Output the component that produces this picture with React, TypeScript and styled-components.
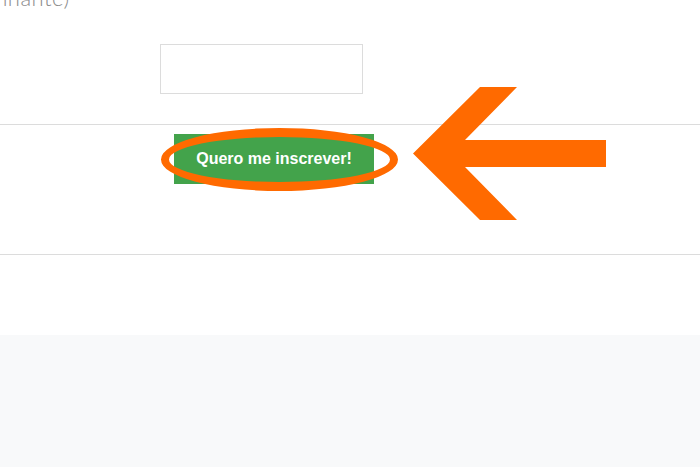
import styled, { createGlobalStyle } from "styled-components";

const GlobalStyle = createGlobalStyle`
    html, body {
        margin: 0;
        padding: 0;
        background: #ffffff;
        font-family: "Liberation Sans", Arial, sans-serif;
    }
`;

const Page = styled.div`
    width: 700px;
    height: 467px;
    display: flex;
    flex-direction: column;
    overflow: hidden;
    position: relative;
`;

const FieldBlock = styled.div`
    height: 124px;
    display: flex;
    flex-direction: column;
`;

const FieldLabel = styled.div`
    font-family: "Lato", "Open Sans", sans-serif;
    font-weight: 300;
    font-size: 22px;
    line-height: 22px;
    letter-spacing: 0.5px;
    color: #8c8c8c;
    margin-top: -13px;
    margin-left: -91px;
    white-space: nowrap;
`;

const InputRow = styled.div`
    padding-left: 160px;
    margin-top: 35px;
`;

const TextInput = styled.input`
    box-sizing: border-box;
    width: 203px;
    height: 50px;
    border: 1px solid #dcdcdc;
    outline: none;
    background: #fff;
`;

const SubmitBlock = styled.div`
    height: 131px;
    border-top: 1px solid #dcdcdc;
    border-bottom: 1px solid #dcdcdc;
    padding: 9px 0 0 174px;
    box-sizing: border-box;
    position: relative;
`;

const SubmitButton = styled.button`
    width: 200px;
    height: 50px;
    background: #43a34b;
    color: #ffffff;
    border: none;
    font-family: "Liberation Sans", Arial, sans-serif;
    font-weight: 700;
    font-size: 16px;
    padding: 0;
    cursor: pointer;
`;

const Highlight = styled.div`
    position: absolute;
    left: 161px;
    top: 3px;
    width: 237px;
    height: 63px;
    box-sizing: border-box;
    border: 9px solid #ff6a00;
    border-left-width: 8px;
    border-right-width: 8px;
    border-radius: 50%;
    pointer-events: none;
`;

const Arrow = styled.svg`
    position: absolute;
    left: 410px;
    top: 84px;
    width: 200px;
    height: 140px;
`;

const Spacer = styled.div`
    height: 80px;
`;

const Footer = styled.div`
    flex: 1;
    background: #f8f9fa;
`;

export default function App() {
    return (
        <>
            <GlobalStyle />
            <Page>
                <FieldBlock>
                    <FieldLabel>(Acompanhante)</FieldLabel>
                    <InputRow>
                        <TextInput type="text" />
                    </InputRow>
                </FieldBlock>
                <SubmitBlock>
                    <SubmitButton>Quero me inscrever!</SubmitButton>
                    <Highlight />
                </SubmitBlock>
                <Spacer />
                <Footer />
                <Arrow viewBox="410 84 200 140">
                    <polygon
                        fill="#ff6a00"
                        points="480,87 517,87 465,140 606,140 606,167 465,167 517,220 480,220 413,153.5"
                    />
                </Arrow>
            </Page>
        </>
    );
}
